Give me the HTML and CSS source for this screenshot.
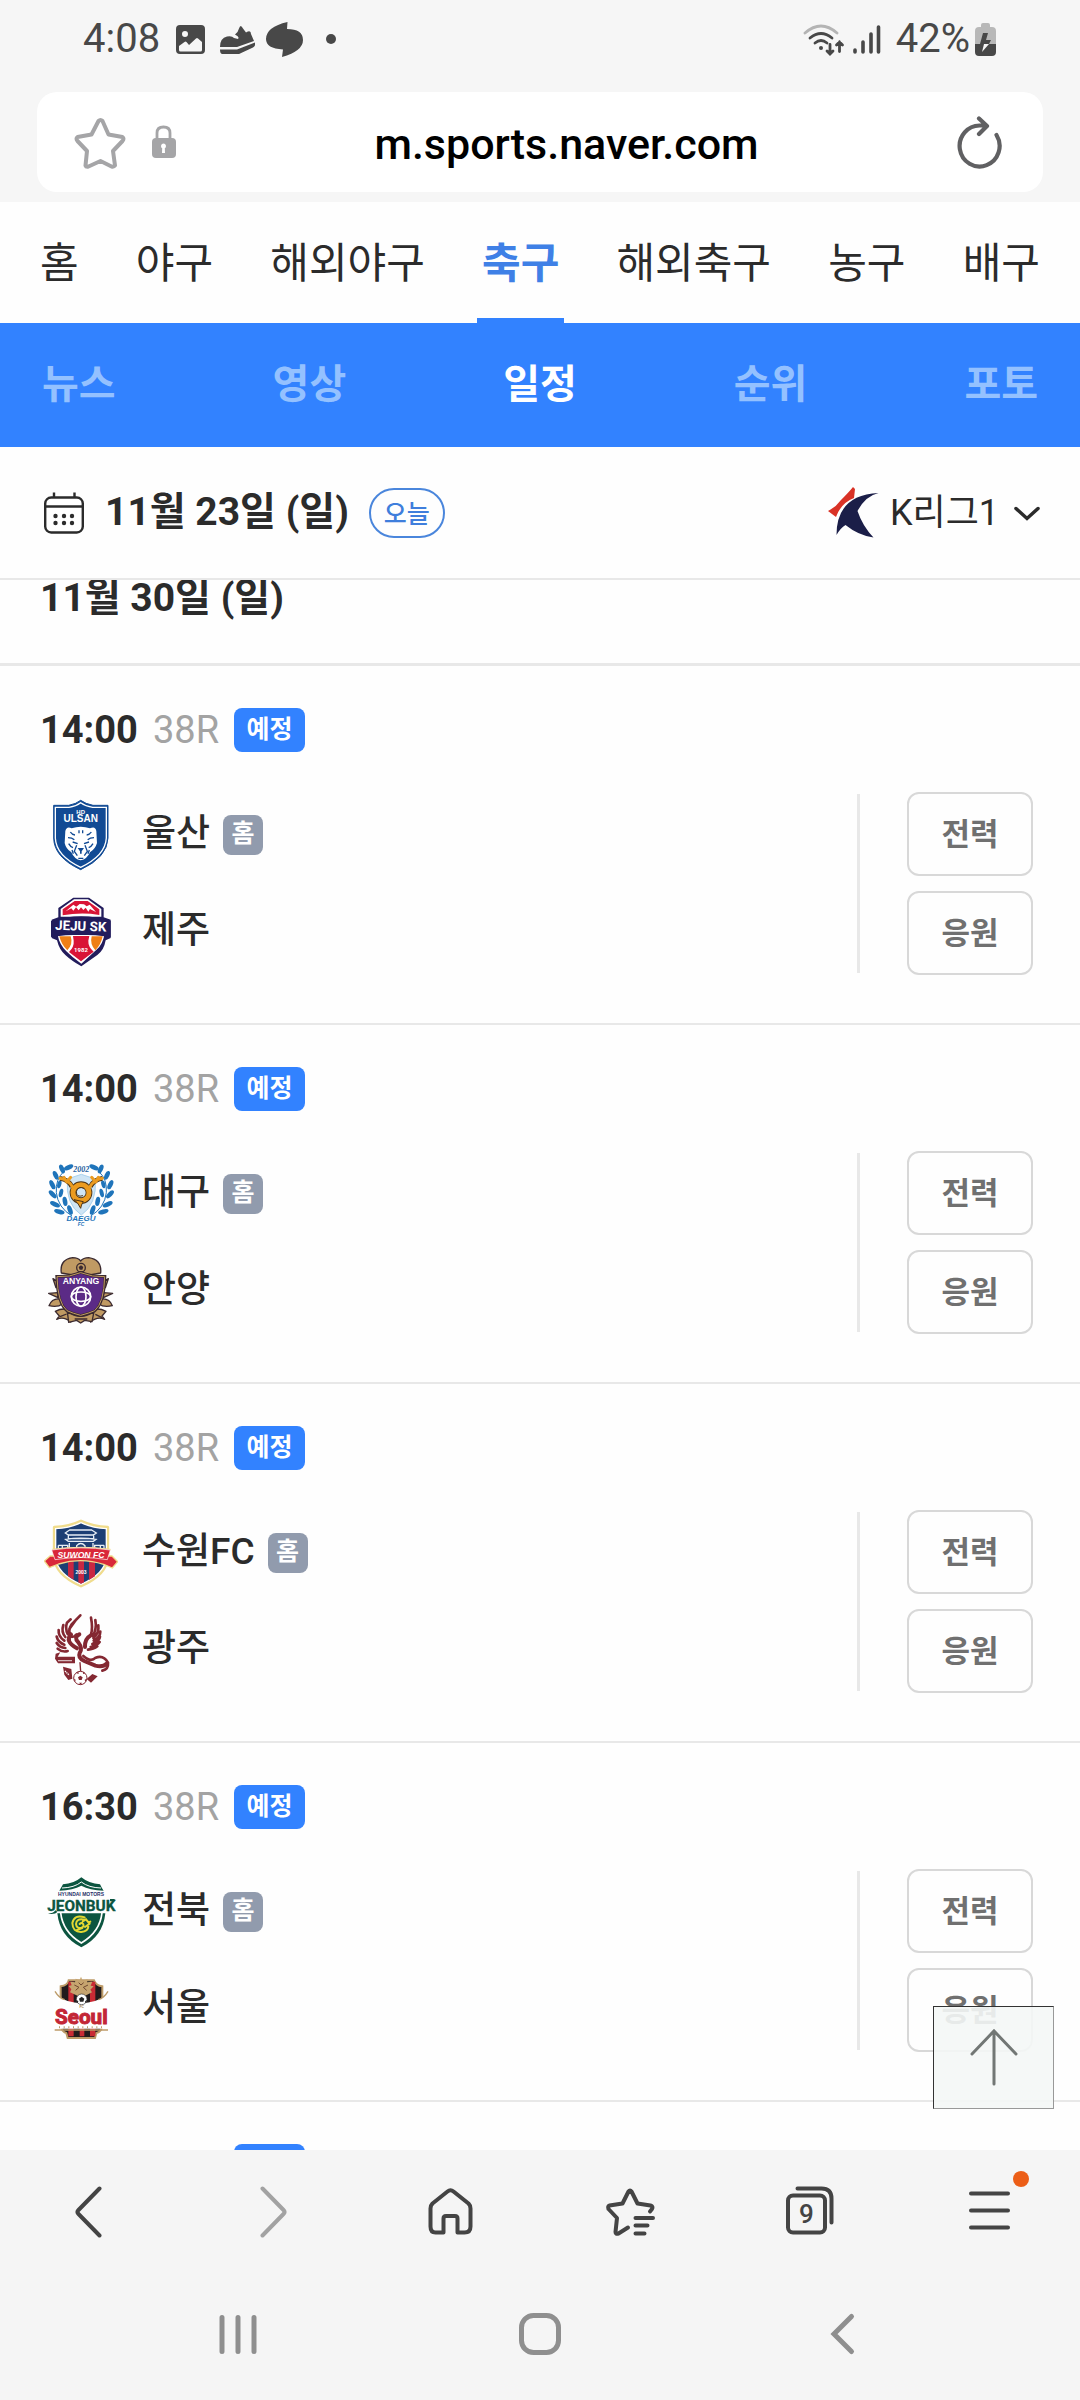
FILE: index.html
```html
<!DOCTYPE html>
<html lang="ko">
<head>
<meta charset="utf-8">
<meta name="viewport" content="width=device-width, initial-scale=1">
<title>K리그1 일정</title>
<link rel="stylesheet" href="styles.css">
</head>
<body>
<header class="chrome-top">
  <div class="status">
    <div class="status-group status-left">
      <span class="status-text">4:08</span>
      <svg width="36" height="36" viewBox="173 21 36 36"><path fill="#484848" fill-rule="evenodd" d="M180 25h21q4 0 4 4v21q0 4-4 4h-21q-4 0-4-4V29q0-4 4-4zM185 31a3 3 0 1 0 0 6 3 3 0 0 0 0-6zM179 46v4q0 1.500 1.500 1.500h20q1.500 0 1.500-1.500v-8l-4-3.500q-1-1-2 0l-7 6.500-2.500-3q-1-1-2 0z"/></svg>
      <svg width="36" height="36" viewBox="219 21 36 36"><path fill="#484848" d="M220 47q0-9 7-10.500 5-1 7 1.500l4 1q2-2-3-4.500 3-2 4-6 1.500-5 4 0l3 4q5-3 5 1.500l3 7-17 6zM220 49.500h17l18-7q1 3-2 5l-14 6.500h-17q-2-.5-2-4.500z"/></svg>
      <svg width="40" height="40" viewBox="265 19 40 40"><path fill="#484848" d="M287.500 22l-.5 7q16 0 16 11 0 11-21 17l1-7.500q-17-1-17-10.500 0-12 21.500-17z"/></svg>
      <svg width="32" height="36" viewBox="315 21 32 36"><circle cx="331" cy="39" r="5" fill="#484848"/></svg>
    </div>
    <div class="status-group status-right">
      <svg width="44" height="36" viewBox="802 21 44 36" fill="none" stroke="#484848" stroke-width="2.800" stroke-linecap="round"><path stroke="#b4b4b4" d="M805 33q16-14 32 0"/><path d="M810 38q11-9 22 0M815 43q6-5 12 0M830 44.500v9m-3-2.500l3 3 3-3M839.500 51.500V42m-3 3l3-3 3 3"/><circle cx="821" cy="48" r="2" fill="#484848" stroke="none"/></svg>
      <svg width="32" height="36" viewBox="852 21 32 36" stroke="#484848" stroke-width="3.600" stroke-linecap="round"><path d="M856 50v2M864 42v10M872 34v18M879.500 27v25"/></svg>
      <span class="status-text">42%</span>
      <svg width="22" height="36" viewBox="975 21 22 36"><path fill="#b8b8b8" d="M981 25q0-2 2-2h5q2 0 2 2v2h2q4 0 4 4v13h-21V31q0-4 4-4h2z"/><path fill="#484848" d="M975 44h21v8q0 4-4 4h-13q-4 0-4-4zM983 33h5l-2 7h5l-2 4h-9z"/><path fill="#f6f6f6" d="M984 44h5l-7 8z"/></svg>
    </div>
  </div>
  <div class="address">
    <button class="icon-button" aria-label="북마크"><svg width="54" height="54" viewBox="74 115 54 54" fill="none" stroke="#a5a5a7" stroke-width="4" stroke-linejoin="round"><path d="M98.500 121q2-2 4 0l6 13.500 14 2.500q2 1.500 0 4l-9.500 10 2 14.500q-1 1.500-3.500 1l-11-5.500-12 5.500q-2.500.5-3-1l1.500-14.500-9.500-10q-2-2.500 0-4l14-2.500z"/></svg></button>
    <svg class="lock" width="26" height="36" viewBox="151 125 26 36"><path fill="none" stroke="#a5a5a7" stroke-width="2.800" d="M157 140v-6q0-6 6.500-6t6.500 6v6"/><rect x="152" y="139" width="24" height="20" rx="4" fill="#a5a5a7"/><path fill="#fff" d="M163.500 144.500a2.600 2.600 0 0 1 1.300 4.800l.2 4.700h-3l.2-4.700a2.600 2.600 0 0 1 1.300-4.800z"/></svg>
    <input class="url" type="text" aria-label="주소" value="m.sports.naver.com">
    <button class="icon-button" aria-label="새로고침"><svg width="50" height="54" viewBox="955 113 50 54" fill="none" stroke="#606062" stroke-width="4.200" stroke-linecap="round" stroke-linejoin="round"><path d="M995.500 133a20 20.500 0 1 1-16-9.500h6M978 116.500l8 7.500-8 8"/></svg></button>
  </div>
</header>
<main class="page">
  <nav class="sports" aria-label="종목">
    <a href="#">홈</a><a href="#">야구</a><a href="#">해외야구</a><a href="#" class="active">축구</a><a href="#">해외축구</a><a href="#">농구</a><a href="#">배구</a>
  </nav>
  <nav class="sections" aria-label="메뉴">
    <a href="#">뉴스</a><a href="#">영상</a><a href="#" class="active">일정</a><a href="#">순위</a><a href="#">포토</a>
  </nav>
  <div class="datebar">
    <button class="date-button">
      <svg width="42" height="44" viewBox="43 490 42 44" fill="none" stroke="#2b2b2b" stroke-width="2.400"><rect x="45.200" y="496.500" width="37.600" height="35" rx="6"/><path d="M45 505.500h38M54 491.500v5M74.500 491.500v5"/><g fill="#2b2b2b" stroke="none"><circle cx="55.500" cy="515" r="2.200"/><circle cx="64" cy="515" r="2.200"/><circle cx="72" cy="515" r="2.200"/><circle cx="55.500" cy="522" r="2.200"/><circle cx="64" cy="522" r="2.200"/><circle cx="72" cy="522" r="2.200"/></g></svg>
      <span class="date-text">11월 23일 (일)</span>
    </button>
    <button class="today">오늘</button>
    <div class="league">
      <svg width="52" height="54" viewBox="828 486 52 54"><path fill="#d93226" d="M853 487l2 2-1 9q-13 5-18 19l-8-6q8-4 13-11 8-8 12-13z"/><path fill="#1b1e48" d="M878.500 493q-13 3-21 18 5 15 16 26.500-15-2-28-12.500-5 3-9 10 0-40 42-42z"/></svg>
      <select aria-label="리그"><option>K리그1</option><option>K리그2</option></select>
      <svg class="chevron" width="28" height="18" viewBox="1013 504 28 18" fill="none" stroke="#2b2b2b" stroke-width="3.500" stroke-linecap="round"><path d="M1016 508.500l11 10 11-10"/></svg>
    </div>
  </div>
  <section class="schedule">
    <h2 class="day">11월 30일 (일)</h2>

    <article class="game">
      <div class="game-head"><time>14:00</time><span class="round">38R</span><span class="badge">예정</span></div>
      <div class="game-body">
        <div class="teams">
          <div class="team">
            <svg class="emblem" viewBox="42 51 222 222"><path fill="#114a94" stroke="#114a94" stroke-width="3" d="M71 73h45q22-4 36-15 15 11 37 15h45v98q-2 58-82 95-80-37-81-95z"/><path fill="none" stroke="#fff" stroke-width="4" d="M76 79h41q21-3 35-14 15 11 36 14h41v92q-3 53-77 88-74-35-76-88z"/><text x="152" y="100" class="e-text" font-size="18" fill="#fff">HD</text><text x="152" y="123" class="e-text" font-size="30" fill="#fff">ULSAN</text><path fill="#fff" d="M106 150q4-16 19-8 27-9 55 0 16-8 19 8l2 36q-5 18-21 28-9 21-28 24-19-3-28-24-16-10-20-28z"/><path fill="none" stroke="#114a94" stroke-width="4" d="M121 153q5 8 14 9M184 153q-5 8-14 9M147 148v9m11-9v9M114 170q12 0 19 6m59-6q-12 0-19 6M128 183l15 5m34-5l-15 5M116 188q5 9 13 12m60-12q-5 9-13 12M140 193l-7 18 9 13m23-31l7 18-9 13M126 207l4 11m48-11l-4 11M145 232h15"/><path fill="#114a94" d="M143 201h19l-7 10v7h-5v-7z"/></svg>
            <span class="name">울산</span><span class="home">홈</span>
          </div>
          <div class="team">
            <svg class="emblem" viewBox="42 342 222 222"><path fill="#221c5c" d="M130 350h47l44 31v28l21 7v55l-15 7q-5 30-25 44l-48 34q-30-17-48-34-18-15-25-44l-16-7v-55l20-7v-28z"/><path fill="#fff" d="M132 355h42l40 29v23H92v-23zM83 462h140q-5 28-22 43l-47 43q-27-18-45-37-21-21-26-49z"/><path fill="#d91436" d="M134 360h39l35 25v17q-53-9-110 1v-18zM129 465h49l-3 14q-1 18 16 33l-38 29-36-28q16-16 14-34z"/><path fill="#ef7f16" d="M88 466h34q8 23-10 42-18-17-24-42zm130 0h-33q-6 23 11 42 17-17 22-42z"/><path fill="#fff" d="M107 391l23-20 9 6 10-8 13 1 8 6 9-5 19 22-18-9-5 8-8-12-7 7-7-8-7 9-8-9-8 10-6-7z"/><path fill="#221c5c" d="M63 420q92-28 179 0v48q-92-13-179 0z"/><text x="152" y="449" class="e-narrow" font-size="40" fill="#fff" transform="rotate(2 152 440)">JEJU SK</text><text x="153" y="512" class="e-narrow" font-size="18" fill="#fff">1982</text></svg>
            <span class="name">제주</span>
          </div>
        </div>
        <div class="divider"></div>
        <div class="actions"><button>전력</button><button>응원</button></div>
      </div>
    </article>

    <article class="game">
      <div class="game-head"><time>14:00</time><span class="round">38R</span><span class="badge">예정</span></div>
      <div class="game-body">
        <div class="teams">
          <div class="team">
            <svg class="emblem" viewBox="42 48 222 222"><path fill="#cfe5f5" stroke="#a9d2ee" stroke-width="3" d="M112 114l42-14 42 14q5 76-42 108-48-32-42-108z"/><g id="laurel" fill="#1f74ba"><ellipse cx="116" cy="79" rx="15" ry="7" transform="rotate(-25 116 79)"/><ellipse cx="96" cy="84" rx="14" ry="7" transform="rotate(65 96 84)"/><ellipse cx="77" cy="103" rx="14" ry="7" transform="rotate(65 77 103)"/><ellipse cx="67" cy="131" rx="15" ry="7" transform="rotate(65 67 131)"/><ellipse cx="68" cy="160" rx="15" ry="7" transform="rotate(45 68 160)"/><ellipse cx="75" cy="190" rx="16" ry="7" transform="rotate(25 75 190)"/><ellipse cx="88" cy="212" rx="16" ry="7" transform="rotate(15 88 212)"/><ellipse cx="88" cy="130" rx="12" ry="6" transform="rotate(105 88 130)"/><ellipse cx="93" cy="156" rx="13" ry="6" transform="rotate(105 93 156)"/><ellipse cx="105" cy="181" rx="14" ry="7" transform="rotate(80 105 181)"/><ellipse cx="120" cy="207" rx="15" ry="7" transform="rotate(70 120 207)"/><path fill="none" stroke="#1f74ba" stroke-width="3" d="M101 92q-25 23-22 63 5 45 47 70"/></g><use href="#laurel" transform="matrix(-1 0 0 1 308 0)"/><path fill="none" stroke="#4b3418" stroke-width="14" d="M90 112q26 4 36 25m91-25q-26 4-36 25"/><circle cx="153" cy="155" r="24" fill="#cfe5f5" stroke="#4b3418" stroke-width="20"/><circle cx="153" cy="155" r="24" fill="none" stroke="#eb9b20" stroke-width="15"/><path fill="#eb9b20" stroke="#4b3418" stroke-width="3" d="M132 176q12 8 20 26 1-10 8-20z"/><path fill="none" stroke="#eb9b20" stroke-width="9" stroke-linecap="round" d="M90 112q26 4 38 27m-21-20l-5-10m8 14l12-14M217 112q-26 4-38 27m21-20l5-10m-8 14l-12-14"/><path fill="none" stroke="#4b3418" stroke-width="3" d="M163 142q-20-8-24 10 0 18 20 12"/><text x="154" y="94" class="e-serif" font-size="24" fill="#1f5e9e">2002</text><text x="153" y="239" class="e-text e-italic" font-size="24" fill="#1f74ba">DAEGU</text><text x="153" y="254" class="e-text e-italic" font-size="15" fill="#1f74ba">FC</text></svg>
            <span class="name">대구</span><span class="home">홈</span>
          </div>
          <div class="team">
            <svg class="emblem" viewBox="42 339 222 222"><g fill="#c09a63" stroke="#3b2a2f" stroke-width="4" stroke-linejoin="round"><path d="M94 396q-6-40 34-46 17 0 24 10 8-10 24-10 40 6 36 46l-58 10z"/><g id="leaf"><path d="M78 440l-9-27 17 10zM84 470l-28-13 27-2zM88 474q-22-2-31 20 26 6 40-5zM76 511q30-16 54 4l-8 28q-20-18-42-8l8-10z"/></g><use href="#leaf" transform="matrix(-1 0 0 1 304 0)"/><path d="M112 512q40 28 80 0l-6 30-22-4-12 8-12-8-24 6z"/></g><circle cx="153" cy="380" r="13" fill="#c09a63" stroke="#3b2a2f" stroke-width="4"/><path fill="#3b2a2f" d="M153 373l7 5-3 8h-8l-3-8z"/><path fill="#5b2b86" stroke="#3b2a2f" stroke-width="8" d="M80 406q38 2 72-12 36 14 73 12-2 80-31 104-18 8-42 14-24-6-41-14-29-24-31-104z"/><path fill="none" stroke="#c09a63" stroke-width="3" d="M81 407q38 2 71-12 36 14 72 12-2 79-30 102-18 8-42 14-24-6-41-14-28-23-30-102z"/><text x="153" y="429" class="e-text" font-size="26" fill="#fff">ANYANG</text><g fill="none" stroke="#fff" stroke-width="5"><circle cx="153" cy="467" r="29"/><ellipse cx="153" cy="467" rx="15" ry="29"/><ellipse cx="153" cy="467" rx="29" ry="14"/></g><path stroke="#5b2b86" stroke-width="8" d="M153 456v22M142 467h22"/><path d="M90 527l20-8M134 534h38M196 520l20 10" stroke="#3b2a2f" stroke-width="4"/></svg>
            <span class="name">안양</span>
          </div>
        </div>
        <div class="divider"></div>
        <div class="actions"><button>전력</button><button>응원</button></div>
      </div>
    </article>

    <article class="game">
      <div class="game-head"><time>14:00</time><span class="round">38R</span><span class="badge">예정</span></div>
      <div class="game-body">
        <div class="teams">
          <div class="team">
            <svg class="emblem" viewBox="42 45 222 222"><path fill="#1d3f74" stroke="#f0dc8c" stroke-width="9" stroke-linejoin="round" d="M73 79q45-2 80-19 36 17 80 19v88q-2 53-80 88-78-35-80-88z"/><path fill="#1d3f74" stroke="#fff" stroke-width="4" d="M77 83q43-2 76-18 34 16 76 18v84q-2 50-76 83-74-33-76-83z"/><path fill="#c92742" d="M114 175h17v61l-17-11zm31 0h17v69l-9 4-8-4zm32 0h18v51l-18 11z"/><path fill="none" stroke="#e8eef5" stroke-width="4" d="M106 96q8-6 13-9h66q7 4 14 9l-9 6h-75zM115 104v9h76v-9M107 115q45-7 91 0l-8 6h-75zM85 133h28v16M222 133h-28v16M85 133v16m12-16v16m114-16v16m11-16v16M118 126v21m71-21v21M140 147v-13q12-13 25 0v13"/><path fill="#d92839" stroke="#f0dc8c" stroke-width="4" stroke-linejoin="round" d="M43 180l17-15h15l-7-20q85-12 172 0l-8 20h14l17 17-16 19-26-11q-68-22-135-1l-28 11z"/><path fill="#d92839" stroke="#fff" stroke-width="2" d="M65 147q88-13 176 0l-9 29q-79-13-157 0z"/><text x="153" y="170" class="e-text e-italic" font-size="26" fill="#fff">SUWON FC</text><text x="153" y="219" class="e-text" font-size="15" fill="#fff">2003</text></svg>
            <span class="name">수원FC</span><span class="home">홈</span>
          </div>
          <div class="team">
            <svg class="emblem" viewBox="42 336 222 222"><g fill="none" stroke="#842832" stroke-linecap="round"><path stroke-width="8" d="M126 407q-16-15-1-37l26-27M118 384l20-28M113 399q-8-17-2-34l11-10M106 408q-13-15-6-36M103 419q-19-13-17-32M103 431q-19-7-23-24M106 441q-17-1-26-15M113 450q-15 5-30-7M183 400q6-20 0-50M188 404q13-18 8-47M190 411q18-15 15-38M191 419q20-12 20-27M187 429q22-9 23-22M182 438q20-5 27-15M174 446q17-1 28-10"/><path stroke-width="12" d="M123 400q-20 20 18 42M181 404q-17 9-16 34"/><path stroke-width="12" d="M148 400q-18 8-3 24 14 19 4 32-6 14 14 24l33 14q23 6 34-6"/><path stroke-width="8" d="M160 465q22 20 37 5 24-9 37 15 2 20-17 24"/><path stroke-width="4" d="M139 398l-14 12 14-4M150 485l2 26"/></g><path fill="#842832" d="M77 458l14-4-8 13h52v20H84l-9-14zM99 497l25 7 3 29-12 4-12-16zM187 519l16 7-20 19-13-11z"/><path stroke="#fff" stroke-width="4" stroke-dasharray="4 2" d="M85 479h42M105 510l13 13"/><circle cx="151" cy="531" r="20" fill="#fff" stroke="#842832" stroke-width="3"/><path fill="#842832" d="M151 524l7 5-3 8h-8l-3-8zM138 516l7-4 1 7zM159 512l7 5-7 2zM131 534l6 2-2 7zM171 533l-7 3 2 7zM147 545h9l-4 6z"/></svg>
            <span class="name">광주</span>
          </div>
        </div>
        <div class="divider"></div>
        <div class="actions"><button>전력</button><button>응원</button></div>
      </div>
    </article>

    <article class="game">
      <div class="game-head"><time>16:30</time><span class="round">38R</span><span class="badge">예정</span></div>
      <div class="game-body">
        <div class="teams">
          <div class="team">
            <svg class="emblem" viewBox="42 42 222 222"><path fill="#0c5540" d="M88 89q5-8 11-19 33-2 55-21 23 19 56 21 5 11 11 19-42-2-67-15-25 13-66 15z"/><path fill="none" stroke="#fff" stroke-width="3" d="M96 81q37-1 58-18 22 17 59 18"/><path fill="#0c5540" d="M82 157h144q-7 70-72 102-65-32-72-102z"/><path fill="none" stroke="#fff" stroke-width="5" d="M92 155q6 58 62 91 56-33 62-91"/><text x="153" y="106" class="e-text" font-size="15" fill="#28306a">HYUNDAI MOTORS</text><path fill="#0c5540" d="M54 158q16 0 22-10l6 4q-6 9-28 6zM240 114h14v7h-14z"/><text x="154" y="149" class="e-narrow" font-size="46" fill="#0c5540" stroke="#0c5540" stroke-width="1">JEONBUK</text><path fill="none" stroke="#e3d832" stroke-width="6" stroke-linecap="round" d="M164 169q-31-10-37 17 1 28 27 27 20-2 21-16M164 176q-25-5-26 13 2 14 15 12 10-3 7-11-5-8-11-1M158 181l10-6 8 10 5-3M165 198l14-10M138 208l19-7"/></svg>
            <span class="name">전북</span><span class="home">홈</span>
          </div>
          <div class="team">
            <svg class="emblem" viewBox="42 333 222 222"><path fill="#221b1c" stroke="#bd9b68" stroke-width="6" d="M116 358h76q6 16 25 18v118q-3 20-18 22l-4 15h-82l-4-15q-14-3-17-22V376q21-3 24-18z"/><path fill="#c92b34" d="M115 362h16v164h-16zm34 0h14v164h-14zm31 0h16v164h-16z"/><path fill="#fff" d="M70 400q84 53 168 0v103H70z"/><path fill="none" stroke="#bd9b68" stroke-width="4" d="M75 391q12 20 29 25M234 391q-12 20-29 25M74 507h160"/><path fill="#c6a46f" d="M153 347l5 12 15-4-2 9 16-2-5 12 9 2-10 10 5 8-22 11h-20l-24-11 4-9-8-10 9-2-4-11 14 2 2-11 12 4z"/><path fill="none" stroke="#704830" stroke-width="3" d="M133 372l14 7-10 9m37-16l-14 7 10 9M146 365l7 7 8-7"/><circle cx="155" cy="415" r="16" fill="#fff" stroke="#333" stroke-width="2"/><path fill="#222" d="M155 407l8 6-3 9h-10l-3-9zM139 416l6 5-2 6zM171 416l-6 5 2 6z"/><text x="155" y="441" class="e-text" font-size="10" fill="#a37b45">FC</text><text x="154" y="490" class="e-narrow" font-size="62" fill="#c32636" stroke="#c32636" stroke-width="3">Seoul</text><path stroke="#bd9b68" stroke-width="6" stroke-dasharray="3 11" d="M87 499h136"/></svg>
            <span class="name">서울</span>
          </div>
        </div>
        <div class="divider"></div>
        <div class="actions"><button>전력</button><button>응원</button></div>
      </div>
    </article>

    <article class="game">
      <div class="game-head"><time>16:30</time><span class="round">38R</span><span class="badge">예정</span></div>
    </article>
  </section>
  <button class="to-top" aria-label="맨 위로"><svg width="52" height="60" viewBox="0 0 52 60" fill="none" stroke="#727775" stroke-width="3" stroke-linecap="round"><path d="M26 56V3M4 26L26 3l22 23"/></svg></button>
</main>
<footer class="chrome-bottom">
  <nav class="toolbar" aria-label="브라우저 도구">
    <button aria-label="뒤로"><svg width="54" height="54" viewBox="63 2185 54 54"><path d="M99.500 2189.500l-21 21.500q-2 2 0 4l21 21.500"/></svg></button>
    <button aria-label="앞으로" class="disabled"><svg width="54" height="54" viewBox="243 2185 54 54"><path d="M262.500 2189.500l21 21.500q2 2 0 4l-21 21.500"/></svg></button>
    <button aria-label="홈"><svg width="54" height="54" viewBox="423 2184 54 54"><path d="M443.500 2232.500h-8q-5 0-5-6v-18q0-3 2-5l15-12q3-2.500 6 0l15 12q2 2 2 5v18q0 6-6 6h-7v-14q0-2.500-2.500-2.500h-9q-2.500 0-2.500 2.500z"/></svg></button>
    <button aria-label="북마크 목록"><svg width="54" height="54" viewBox="603 2184 54 54"><path d="M628 2227.500l-9.500 6q-3 1-3-1.500l1.500-14-8.500-9q-1-3 1-3.500l13-2 6-12q1.500-2 3 0l6 12 13 2q3 1 1.500 3.500l-2 2.500M635.500 2218h17.500M635.500 2225.500h12M635.500 2233.500h9"/></svg></button>
    <button aria-label="탭 9개" class="tabs"><svg width="54" height="54" viewBox="783 2184 54 54"><rect x="788" y="2195.500" width="37" height="37" rx="5"/><path d="M797.500 2188.500h24q10 0 10 10v24"/></svg><span class="tab-count">9</span></button>
    <button aria-label="메뉴" class="menu"><svg width="54" height="54" viewBox="963 2184 54 54"><path d="M971 2193.500h37M971 2210.500h37M971 2227.500h37"/></svg><span class="dot"></span></button>
  </nav>
  <nav class="system" aria-label="시스템 탐색">
    <button aria-label="최근 앱"><svg width="48" height="48" viewBox="214 2310 48 48"><path d="M222 2317.500v34M238 2317.500v34M254 2317.500v34"/></svg></button>
    <button aria-label="홈 화면"><svg width="48" height="48" viewBox="516 2310 48 48"><rect x="521.500" y="2315.500" width="37" height="37" rx="12"/></svg></button>
    <button aria-label="이전"><svg width="48" height="48" viewBox="818 2310 48 48"><path d="M851.500 2316.500l-17.500 17.500 17.500 17.500"/></svg></button>
  </nav>
</footer>
</body>
</html>
```
FILE: styles.css
```css
* { box-sizing: border-box; }

body {
  margin: 0;
  height: 100vh;
  display: flex;
  flex-direction: column;
  overflow: hidden;
  background: #fefefe;
  color: #2b2b2b;
  font-family: Roboto, "Noto Sans CJK KR", sans-serif;
}

svg { display: block; flex: none; }
a { color: inherit; text-decoration: none; }

button {
  margin: 0;
  padding: 0;
  border: 0;
  background: none;
  color: inherit;
  font: inherit;
}

/* Browser chrome, top */
.chrome-top {
  flex: none;
  padding-bottom: 10px;
  background: #f6f6f6;
}

.status {
  display: flex;
  justify-content: space-between;
  align-items: center;
  height: 78px;
  margin-bottom: 14px;
  padding: 0 83px;
}

.status-group { display: flex; align-items: center; gap: 10px; }
.status-left .status-text { margin-right: 3px; }
.status-right { gap: 5px; }
.status-right .status-text { margin-left: 8px; }
.status-text { font-size: 40px; line-height: 48px; color: #484848; }

.address {
  display: flex;
  align-items: center;
  gap: 23px;
  height: 100px;
  margin: 0 37px;
  padding: 0 37px;
  border-radius: 20px;
  background: #fff;
}

.url {
  flex: 1;
  min-width: 0;
  padding: 4px 0 0;
  border: 0;
  outline: 0;
  background: none;
  color: #000;
  text-align: center;
  font: 500 43px/56px Roboto, sans-serif;
}

/* Navigation */
.page {
  position: relative;
  flex: 1;
  min-height: 0;
  display: flex;
  flex-direction: column;
}

.sports {
  flex: none;
  display: flex;
  justify-content: space-between;
  height: 121px;
  padding: 0 35px;
  font-size: 42px;
  line-height: 123px;
}

.sports a { height: 121px; padding: 0 5px; }
.sports .active { border-bottom: 5px solid #3282ff; color: #3f80e6; font-weight: 700; }

.sections {
  flex: none;
  display: flex;
  justify-content: space-between;
  padding: 0 42px;
  background: #3282ff;
  color: #94c1ff;
  font-size: 40px;
  font-weight: 700;
  line-height: 124px;
}

.sections .active { color: #fff; }

/* Date bar */
.datebar {
  flex: none;
  display: flex;
  align-items: center;
  height: 133px;
  padding: 0 39px 0 43px;
  border-bottom: 2px solid #e8e8e8;
}

.date-button { display: flex; align-items: center; gap: 20px; }
.date-text { padding-bottom: 2px; font-size: 39px; font-weight: 700; line-height: 50px; }

.today {
  width: 76px;
  height: 50px;
  margin-left: 20px;
  padding-bottom: 2px;
  border: 2px solid #4a86dc;
  border-radius: 25px;
  color: #3f7edc;
  font-size: 25px;
  font-weight: 500;
}

.league { display: flex; align-items: center; gap: 10px; margin-left: auto; }

.league select {
  width: 113px;
  padding: 0;
  border: 0;
  outline: 0;
  appearance: none;
  background: none;
  color: inherit;
  font: inherit;
  font-size: 36px;
  line-height: 50px;
}

.chevron { pointer-events: none; }

/* Schedule */
.schedule { flex: 1; min-height: 0; overflow: hidden; }

.day {
  height: 86px;
  margin: 0;
  padding-left: 40px;
  border-bottom: 3px solid #e8e8e8;
  font-size: 39px;
  font-weight: 700;
  line-height: 36px;
}

.game { padding: 42px 47px 48px 40px; border-bottom: 2px solid #e8e8e8; }

.game-head {
  display: flex;
  align-items: center;
  gap: 15px;
  height: 44px;
  margin-bottom: 40px;
  font-size: 38px;
  line-height: 44px;
}

.game-head time { font-weight: 700; }
.round { color: #a3a3a3; }

.badge {
  width: 71px;
  border-radius: 8px;
  background: #3282ff;
  color: #fff;
  text-align: center;
  font-size: 25px;
  font-weight: 700;
}

.game-body { display: flex; height: 183px; }

.teams {
  flex: 1;
  display: flex;
  flex-direction: column;
  justify-content: center;
  gap: 23px;
  padding-left: 4px;
}

.team { display: flex; align-items: center; }
.emblem { width: 74px; height: 74px; margin-right: 24px; }
.e-text, .e-narrow, .e-serif { font-family: "Liberation Sans", sans-serif; font-weight: 700; text-anchor: middle; }
.e-narrow { font-family: "Liberation Sans Narrow", Roboto, sans-serif; }
.e-serif { font-family: "Liberation Serif", serif; font-style: italic; }
.e-italic { font-style: italic; }
.name { padding-bottom: 2px; font-size: 37px; font-weight: 500; line-height: 50px; }

.home {
  width: 40px;
  height: 40px;
  margin-left: 13px;
  border-radius: 8px;
  background: #919bad;
  color: #fff;
  text-align: center;
  font-size: 25px;
  font-weight: 700;
  line-height: 38px;
}

.divider { width: 3px; margin: 2px 47px 2px 0; background: #e8e8e8; }
.actions { display: flex; flex-direction: column; gap: 15px; }

.actions button {
  width: 126px;
  height: 84px;
  padding-bottom: 5px;
  border: 2px solid #d8d8d8;
  border-radius: 12px;
  color: #707070;
  font-size: 31px;
  font-weight: 700;
}

/* Floats over the list */
.to-top {
  position: absolute;
  right: 26px;
  bottom: 41px;
  display: flex;
  align-items: center;
  justify-content: center;
  width: 121px;
  height: 103px;
  border: 1px solid #999;
  border-top-color: #333;
  border-left-color: #333;
  background: rgba(244, 247, 246, .9);
}

/* Browser chrome, bottom */
.chrome-bottom { flex: none; padding-bottom: 4px; background: #f5f5f5; }
.toolbar, .system { display: grid; justify-items: center; align-items: center; }

.toolbar {
  grid-template-columns: repeat(6, 1fr);
  height: 122px;
  fill: none;
  stroke: #444;
  stroke-width: 4px;
  stroke-linecap: round;
  stroke-linejoin: round;
}

.toolbar .disabled { stroke: #a2a2a2; }
.tabs, .menu { position: relative; }
.tab-count { position: absolute; left: 5px; top: 12px; width: 37px; text-align: center; color: #444; font-size: 26px; font-weight: 500; line-height: 36px; }
.dot { position: absolute; right: -12px; top: -13px; width: 16px; height: 16px; border-radius: 50%; background: #ec5e17; }

.system {
  grid-template-columns: repeat(3, 1fr);
  height: 124px;
  padding: 0 87px;
  fill: none;
  stroke: #8f8f8f;
  stroke-width: 5px;
  stroke-linecap: round;
}
```
